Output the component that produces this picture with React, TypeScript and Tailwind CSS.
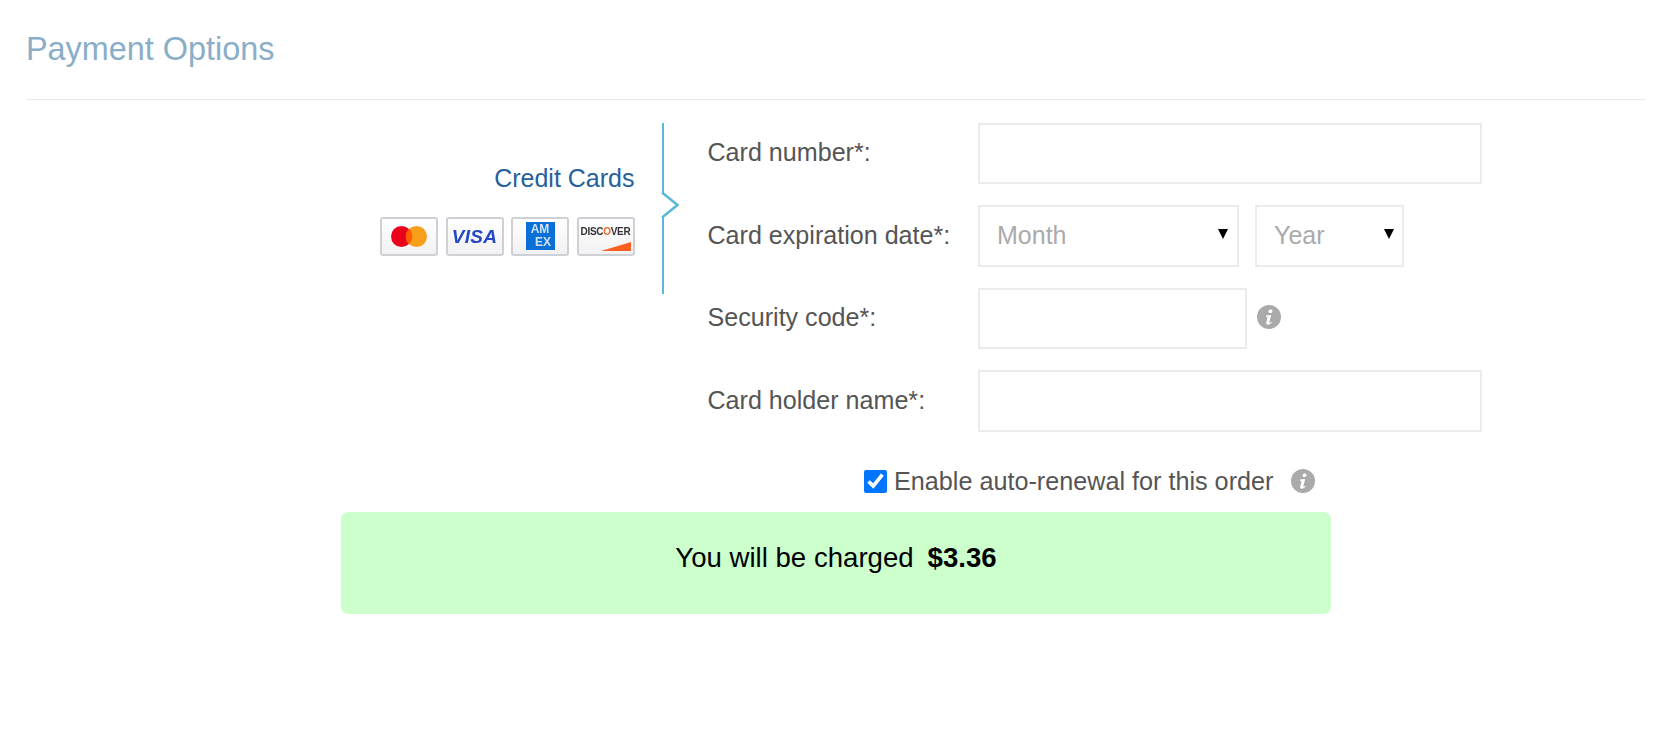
import { useState } from "react";

const fieldClass = "border-2 border-[#ebebeb] bg-white h-[61.5px] outline-none";
const labelClass = "w-[270.5px] shrink-0 text-[25.1px] text-[#555555] -ml-px";

function InfoIcon({ className }: { className: string }) {
  return (
    <svg viewBox="0 0 24 24" className={className}>
      <circle cx="12" cy="12" r="12" fill="#aaaaaa" />
      <path
        d="M13.6 4.4c1.3 0 2 .8 1.9 1.8-.1 1.1-1 1.9-2.2 1.9-1.2 0-1.9-.8-1.8-1.9.1-1 1-1.8 2.1-1.8zM9 10.6l5.2-.6-1.8 7c-.1.5 0 .7.3.7.4 0 1-.4 1.5-1l.6.5c-1 1.6-2.400 2.500-4 2.500-1.300 0-1.900-.7-1.600-2l1.200-4.700c.1-.5 0-.8-.5-.9l-.6-.1z"
        fill="#ffffff"
      />
    </svg>
  );
}

function CardShell({ children }: { children: React.ReactNode }) {
  return (
    <div className="w-[58px] h-[39px] rounded-[3px] border-2 border-[#cfcfd6] bg-gradient-to-b from-white to-[#f1f1f3] flex items-center justify-center overflow-hidden relative">
      <div className="blur-[0.5px] flex items-center justify-center">{children}</div>
    </div>
  );
}

function SelectField({ label, className, arrowClass }: { label: string; className: string; arrowClass: string }) {
  return (
    <div className={`relative ${className}`}>
      <select
        className={`${fieldClass} w-full appearance-none pl-[17px] text-[25px] text-[#aaaaaa]`}
        style={{ fontFamily: "inherit" }}
      >
        <option>{label}</option>
      </select>
      <svg viewBox="0 0 10 10" className={`absolute top-[24px] w-[10px] h-[10px] pointer-events-none ${arrowClass}`}>
        <path d="M0 0h10L5 10z" fill="#000000" />
      </svg>
    </div>
  );
}

export default function App() {
  const [autoRenew, setAutoRenew] = useState(true);

  return (
    <div className="w-[1670px] h-[735px] bg-white px-[26px] overflow-hidden font-['Liberation_Sans',Arial,sans-serif]">
      <div className="h-[100px] border-b border-[#e9e9e9] mr-[-2px] pt-[29px]">
        <h2 className="text-[32.4px] leading-[40px] text-[#8aaec8] font-normal">Payment Options</h2>
      </div>

      <div className="flex mt-[22.5px]">
        {/* left: method selector */}
        <div className="relative w-[638px] h-[171.5px] border-r-[2.5px] border-[#5cb8d6] shrink-0">
          <div className="flex flex-col items-end pr-[27.5px] pt-[40px]">
            <div className="text-[25px] leading-[30px] text-[#25619c]">Credit Cards</div>
            <div className="flex gap-[7.5px] mt-[24px]">
              <CardShell>
                <svg viewBox="0 0 36 21" className="w-[36px] h-[21px]">
                  <circle cx="10.500" cy="10.500" r="10.500" fill="#eb001b" />
                  <circle cx="25.500" cy="10.500" r="10.500" fill="#f79e1b" />
                  <path d="M18 2.800a10.500 10.500 0 0 1 0 15.400 10.500 10.500 0 0 1 0-15.400z" fill="#ff5f00" />
                </svg>
              </CardShell>
              <CardShell>
                <span className="text-[19px] leading-none font-bold italic text-[#2447c4] tracking-[0.3px]">VISA</span>
              </CardShell>
              <CardShell>
                <div className="w-[29px] h-[28px] bg-[#0a6fd6] flex flex-col items-center justify-center text-[#cfe2f8] text-[12px] leading-[13px] font-bold">
                  <span>AM</span>
                  <span className="pl-[6px]">EX</span>
                </div>
              </CardShell>
              <CardShell>
                <span className="text-[10px] leading-none font-bold text-[#333333] mb-[8px] tracking-[-0.3px]">
                  DISC<span className="text-[#f26a21]">O</span>VER
                </span>
              </CardShell>
            </div>
          </div>
          {/* orange corner of the discover card */}
          <svg viewBox="0 0 30 9" className="absolute left-[575px] top-[119px] w-[30px] h-[9px] blur-[0.4px]">
            <path d="M0 9L30 0v9z" fill="#ff5f1f" />
          </svg>
          {/* chevron on the divider */}
          <svg viewBox="0 0 18 26" className="absolute left-[635px] top-[69px] w-[18px] h-[26px]">
            <path d="M0 0l16 13L0 26" fill="#ffffff" />
            <path d="M1 0.500l15.500 12.500L1 25.500" fill="none" stroke="#5cb8d6" strokeWidth="2.500" />
          </svg>
        </div>

        {/* right: card fields */}
        <div className="pl-[44.5px] flex flex-col gap-[21px] w-[840px]">
          <div className="flex items-center">
            <label className={labelClass}>Card number*:</label>
            <input className={`${fieldClass} w-[504px]`} />
          </div>
          <div className="flex items-center">
            <label className={labelClass}>Card expiration date*:</label>
            <div className="flex gap-[16px]">
              <SelectField label="Month" className="w-[261px]" arrowClass="right-[11px]" />
              <SelectField label="Year" className="w-[149px]" arrowClass="right-[10px]" />
            </div>
          </div>
          <div className="flex items-center">
            <label className={labelClass}>Security code*:</label>
            <input className={`${fieldClass} w-[269px]`} />
            <InfoIcon className="w-[24px] h-[24px] ml-[10px] -mt-[3px]" />
          </div>
          <div className="flex items-center">
            <label className={labelClass}>Card holder name*:</label>
            <input className={`${fieldClass} w-[504px]`} />
          </div>
        </div>
      </div>

      <div className="flex items-center mt-[34.5px] pl-[838px] w-fit">
        <label className="flex items-center">
          <input
            type="checkbox"
            checked={autoRenew}
            onChange={(e) => setAutoRenew(e.target.checked)}
            className="w-[23px] h-[23px] m-0 accent-[#0075ff]"
          />
          <span className="ml-[7px] text-[25.200px] leading-[30px] text-[#555555]">Enable auto-renewal for this order</span>
        </label>
        <InfoIcon className="w-[24px] h-[24px] ml-[18px]" />
      </div>

      <div className="ml-[315px] mt-[16px] w-[990px] h-[102px] rounded-[7px] bg-[#ccffcc] flex items-center justify-center pb-[10px] text-[27.600px] text-black">
        <span>You will be charged</span>
        <span className="font-bold ml-[14px]">$3.36</span>
      </div>
    </div>
  );
}
